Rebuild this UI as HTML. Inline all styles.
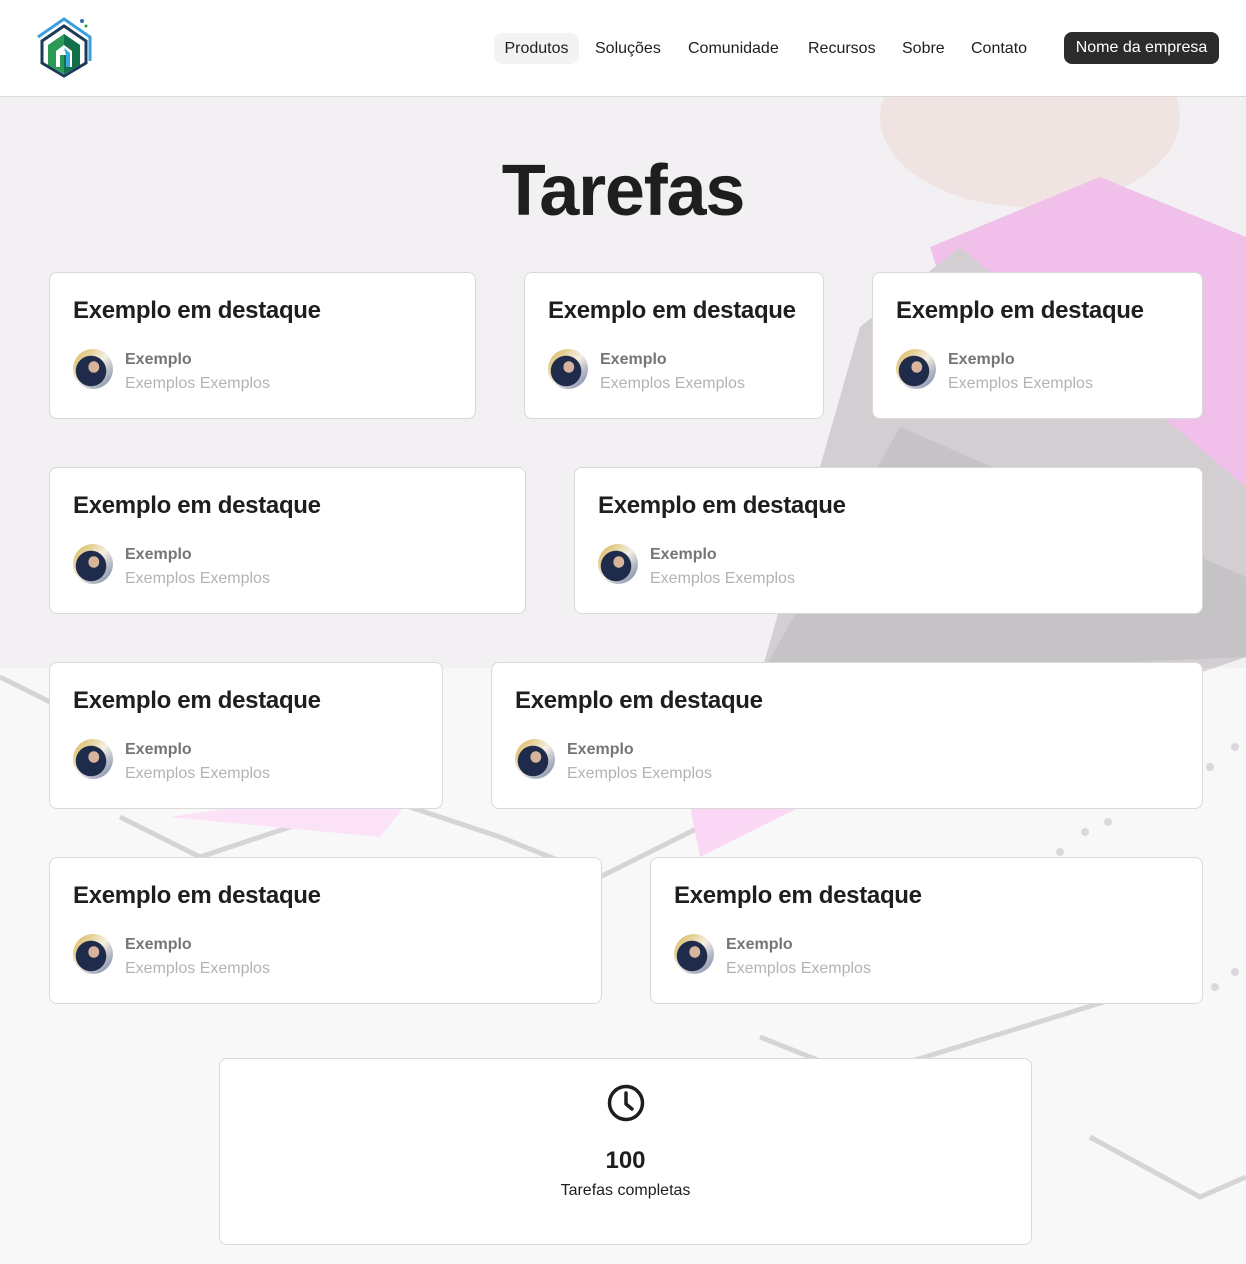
<!DOCTYPE html>
<html><head><meta charset="utf-8"><style>
*{box-sizing:border-box;margin:0;padding:0}
body{width:1246px;height:1264px;position:relative;overflow:hidden;background:#fff;font-family:"Liberation Sans",sans-serif;color:#1e1e1e}
.hdr{position:absolute;left:0;top:0;width:1246px;height:97px;background:#fff;border-bottom:1px solid #d9d9d9}
.nav{position:absolute;top:33px;height:31px;line-height:31px;font-size:16px;color:#1e1e1e}
.bg{position:absolute;left:0;top:97px;width:1246px;height:1167px;background:#f6f5f6;overflow:hidden}
.card{position:absolute;background:#fff;border:1px solid #d9d9d9;border-radius:8px;height:147px}
.card h3{position:absolute;left:23px;top:24px;font-size:24px;font-weight:600;letter-spacing:-0.3px;color:#1e1e1e;white-space:nowrap}
.av{position:absolute;left:23px;top:76px;width:40px;height:40px;border-radius:50%;background:radial-gradient(ellipse at 52% 45%,#d9b49c 0 18%,transparent 19%),radial-gradient(ellipse at 45% 55%,#1e2b4a 0 48%,transparent 50%),linear-gradient(135deg,#d7b24a,#f4efe4 50%,#6a7aa0)}
.n1{position:absolute;left:75px;top:78px;font-size:16px;font-weight:600;color:#757575}
.n2{position:absolute;left:75px;top:102px;font-size:16px;color:#b3b3b3}
</style></head><body>
<div class="hdr">
<svg style="position:absolute;left:34px;top:15px" width="62" height="64" viewBox="0 0 62 64">
<path d="M4 22 L30 4 L56 22 V46" fill="none" stroke="#3aa0dc" stroke-width="3"/>
<path d="M8 26 L30 11 L52 26 V48 L30 61 L8 48 Z" fill="none" stroke="#1c3b5a" stroke-width="3"/>
<path d="M14 30 L30 19 L46 30 V50 L30 59 L14 50 Z" fill="#2a9a55"/>
<path d="M30 19 L46 30 V50 L30 59 Z" fill="#11704a"/>
<path d="M22 52 V36 L30 30 L38 36 V52 H34 V40 H26 V52 Z" fill="#fff"/>
<path d="M30 33 L36 38 V52 H32 V40 Z" fill="#3aa8e0"/>
<circle cx="48" cy="6" r="2" fill="#2a70b8"/><circle cx="52" cy="11" r="1.5" fill="#2a9a55"/>
</svg>
<div class="nav" style="left:494px;width:85px;background:#f3f3f3;border-radius:8px;text-align:center">Produtos</div>
<div class="nav" style="left:595px">Soluções</div>
<div class="nav" style="left:688px">Comunidade</div>
<div class="nav" style="left:808px">Recursos</div>
<div class="nav" style="left:902px">Sobre</div>
<div class="nav" style="left:971px">Contato</div>
<div class="nav" style="left:1064px;width:155px;height:32px;top:32px;background:#2c2c2c;color:#fff;border-radius:8px;text-align:center">Nome da empresa</div>
</div>
<div class="bg">
<svg width="1246" height="1167" style="position:absolute;left:0;top:0">
<ellipse cx="1030" cy="20" rx="150" ry="90" fill="#f3e4df"/>
<path d="M930 150 L1100 80 L1246 140 V560 L1050 520 Z" fill="#f4b0ec"/>
<path d="M860 230 L960 150 L1246 390 V560 L1130 600 L760 580 Z" fill="#c9c5c9"/>
<path d="M900 330 L1246 480 V560 L760 580 Z" fill="#b8b5b9"/>
<g fill="none" stroke="#c2bec2" stroke-width="5">
<path d="M120 720 L200 760 L380 700 L500 740 L600 780 L720 720"/>
<path d="M760 940 L860 980 L1120 900"/>
<path d="M1090 1040 L1200 1100 L1246 1080"/>
<path d="M1000 880 L1150 840"/>
<path d="M0 580 L60 610"/>
</g>
<path d="M170 720 L300 700 L420 690 L380 740 Z" fill="#f9d3f3"/>
<path d="M680 660 L760 600 L820 700 L700 760 Z" fill="#f8c2f0"/>
<g fill="#c8c4c8"><circle cx="1060" cy="755" r="4"/><circle cx="1085" cy="735" r="4"/><circle cx="1108" cy="725" r="4"/><circle cx="1210" cy="670" r="4"/><circle cx="1235" cy="650" r="4"/><circle cx="1215" cy="890" r="4"/><circle cx="1235" cy="875" r="4"/></g>
<rect x="0" y="0" width="1246" height="571" fill="#e8e6e8" opacity="0.3"/>
<rect x="0" y="571" width="1246" height="600" fill="#fff" opacity="0.35"/>
</svg>
</div>
<div style="position:absolute;left:0;top:150px;width:1246px;text-align:center;font-size:72px;font-weight:700;letter-spacing:-1.2px;color:#1e1e1e">Tarefas</div>

<div class="card" style="left:49px;top:272px;width:427px"><h3>Exemplo em destaque</h3><div class="av"></div><div class="n1">Exemplo</div><div class="n2">Exemplos Exemplos</div></div>
<div class="card" style="left:524px;top:272px;width:300px"><h3>Exemplo em destaque</h3><div class="av"></div><div class="n1">Exemplo</div><div class="n2">Exemplos Exemplos</div></div>
<div class="card" style="left:872px;top:272px;width:331px"><h3>Exemplo em destaque</h3><div class="av"></div><div class="n1">Exemplo</div><div class="n2">Exemplos Exemplos</div></div>

<div class="card" style="left:49px;top:467px;width:477px"><h3>Exemplo em destaque</h3><div class="av"></div><div class="n1">Exemplo</div><div class="n2">Exemplos Exemplos</div></div>
<div class="card" style="left:574px;top:467px;width:629px"><h3>Exemplo em destaque</h3><div class="av"></div><div class="n1">Exemplo</div><div class="n2">Exemplos Exemplos</div></div>

<div class="card" style="left:49px;top:662px;width:394px"><h3>Exemplo em destaque</h3><div class="av"></div><div class="n1">Exemplo</div><div class="n2">Exemplos Exemplos</div></div>
<div class="card" style="left:491px;top:662px;width:712px"><h3>Exemplo em destaque</h3><div class="av"></div><div class="n1">Exemplo</div><div class="n2">Exemplos Exemplos</div></div>

<div class="card" style="left:49px;top:857px;width:553px"><h3>Exemplo em destaque</h3><div class="av"></div><div class="n1">Exemplo</div><div class="n2">Exemplos Exemplos</div></div>
<div class="card" style="left:650px;top:857px;width:553px"><h3>Exemplo em destaque</h3><div class="av"></div><div class="n1">Exemplo</div><div class="n2">Exemplos Exemplos</div></div>

<div class="card" style="left:219px;top:1058px;width:813px;height:187px">
<svg style="position:absolute;left:386px;top:24px" width="40" height="40" viewBox="0 0 40 40"><circle cx="20" cy="20" r="16.5" fill="none" stroke="#1e1e1e" stroke-width="3.5"/><path d="M20 10 V21 L26 26" fill="none" stroke="#1e1e1e" stroke-width="3.5" stroke-linecap="round" stroke-linejoin="round"/></svg>
<div style="position:absolute;left:0;width:100%;top:88px;text-align:center;font-size:24px;font-weight:600">100</div>
<div style="position:absolute;left:0;width:100%;top:123px;text-align:center;font-size:16px">Tarefas completas</div>
</div>
</body></html>
